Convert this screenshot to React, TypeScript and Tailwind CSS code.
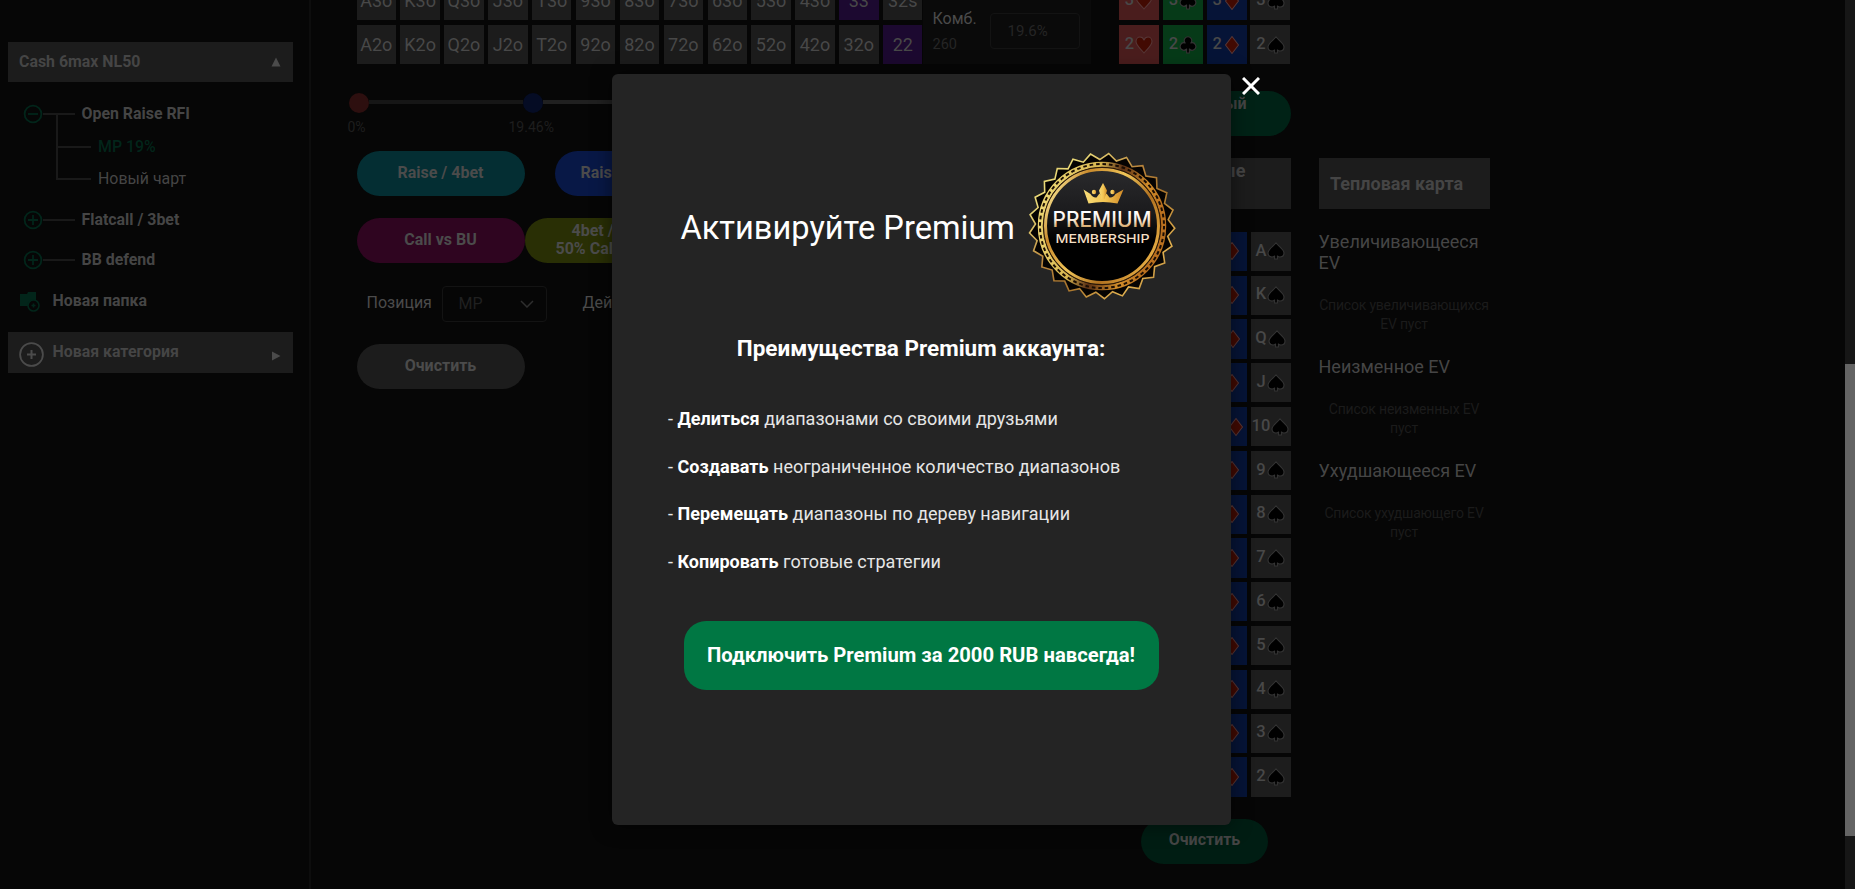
import React from "react";

type Suit = "heart" | "club" | "diamond" | "spade";

const SUIT_BG: Record<Suit, string> = {
  heart: "bg-[#4a1d1d]",
  club: "bg-[#063a18]",
  diamond: "bg-[#061437]",
  spade: "bg-[#1d1d1d]",
};

function SuitIcon({ suit }: { suit: Suit }) {
  const red = suit === "heart" || suit === "diamond";
  return (
    <svg
      viewBox="0 0 18 18"
      className="h-[18px] w-[18px] shrink-0"
      fill={red ? "#420a02" : "#000"}
      stroke={red ? "#563636" : "#343434"}
      strokeWidth="1.1"
      strokeLinejoin="round"
    >
      {suit === "heart" && (
        <path d="M9 17C7 14 1 10 1 5.6C1 2.8 2.9 1 5 1C7 1 8.4 2.3 9 4C9.600 2.300 11 1 13 1C15.100 1 17 2.800 17 5.600C17 10 11 14 9 17Z" />
      )}
      {suit === "diamond" && <path d="M9 .5L15.500 9L9 17.500L2.500 9Z" />}
      {suit === "spade" && (
        <path d="M9 .8C11 4 17 7 17 11C17 13.600 15 15 13 15C12 15 11 14.600 10.400 14V17H7.600V14C7 14.600 6 15 5 15C3 15 1 13.600 1 11C1 7 7 4 9 .8Z" />
      )}
      {suit === "club" && (
        <path d="M9 .8A3.700 3.700 0 0 1 11.800 7A3.700 3.700 0 1 1 10.400 13V17H7.600V13A3.700 3.700 0 1 1 6.200 7A3.700 3.700 0 0 1 9 .8Z" />
      )}
    </svg>
  );
}

function Card({ rank, suit }: { rank: string; suit: Suit }) {
  return (
    <div className={`flex h-[39.300px] w-10 items-center justify-center gap-px text-[16.500px] font-medium text-[#484848] ${SUIT_BG[suit]}`}>
      <span className="-mt-px">{rank}</span>
      <SuitIcon suit={suit} />
    </div>
  );
}

function CircleIcon({ minus, className }: { minus?: boolean; className: string }) {
  return (
    <svg viewBox="0 0 20 20" className={className} fill="none" stroke="currentColor" strokeWidth="1.8">
      <circle cx="10" cy="10" r="8.400" />
      <path d={minus ? "M5 10H15" : "M5 10H15M10 5V15"} />
    </svg>
  );
}

function FolderRow({ label, minus }: { label: string; minus?: boolean }) {
  return (
    <div className="flex h-8 items-center pl-[23px]">
      <CircleIcon minus={minus} className="h-5 w-5 text-[#02251a]" />
      <div className="h-[2px] w-8 bg-[#191919]" />
      <span className="ml-[6.500px] font-bold">{label}</span>
    </div>
  );
}

function Sidebar() {
  return (
    <aside className="h-full w-[311px] shrink-0 border-r-2 border-[#0d0d0d] pl-[7.500px] pt-[42px] text-[15.900px] leading-5 text-[#454545]">
      <div className="flex h-10 w-[285px] items-center justify-between bg-[#1c1c1c] pl-[11.500px] pr-3">
        <span className="font-bold">Cash 6max NL50</span>
        <svg viewBox="0 0 10 10" className="h-[10px] w-[10px]" fill="#4b4b4b"><path d="M5 .5L9.500 9.500H.5Z" /></svg>
      </div>
      <div className="-ml-[7.500px] mt-4">
        <FolderRow label="Open Raise RFI" minus />
        <div className="-mt-4 ml-[56px] h-[66px] w-[2px] bg-[#191919]" />
        <div className="-mt-[43px] ml-[57px] flex h-5 items-center">
          <div className="h-[2px] w-[34px] bg-[#191919]" />
          <span className="ml-[7px] font-medium text-[#02251a]">MP 19%</span>
        </div>
        <div className="ml-[57px] mt-3 flex h-5 items-center">
          <div className="h-[2px] w-[34px] bg-[#191919]" />
          <span className="ml-[7px]">Новый чарт</span>
        </div>
        <div className="mt-[15px] flex flex-col gap-2">
          <FolderRow label="Flatcall / 3bet" />
          <FolderRow label="BB defend" />
        </div>
      </div>
      <div className="mt-[14px] flex h-[22px] items-center pl-[11px]">
        <svg viewBox="0 0 22 22" className="mt-[2px] h-[22px] w-[22px]">
          <path d="M1 3H8L9 1H17V12H13L10 15H1Z" fill="#02251a" />
          <circle cx="14.500" cy="14.500" r="5.500" fill="#060606" stroke="#02251a" strokeWidth="1.600" />
          <path d="M14.500 12.500V16.500M12.500 14.500H16.500" stroke="#02251a" strokeWidth="1.600" />
        </svg>
        <span className="ml-3 font-bold">Новая папка</span>
      </div>
      <div className="mt-5 flex h-[41px] w-[285px] items-center bg-[#1c1c1c] pl-[11px] pr-3">
        <svg viewBox="0 0 25 25" className="mt-1 h-[25px] w-[25px]" fill="none" stroke="#4b4b4b">
          <circle cx="12.500" cy="12.500" r="11.400" strokeWidth="1.800" />
          <path d="M12.500 8V17M8 12.500H17" strokeWidth="2" />
        </svg>
        <span className="-mt-[2px] ml-[9px] font-bold">Новая категория</span>
        <svg viewBox="0 0 10 10" className="ml-auto mt-[7px] h-[10px] w-[10px]" fill="#4b4b4b"><path d="M1 .5L9.500 5L1 9.500Z" /></svg>
      </div>
    </aside>
  );
}

const ROW_3 = ["A3o", "K3o", "Q3o", "J3o", "T3o", "93o", "83o", "73o", "63o", "53o", "43o", "33", "32s"];
const ROW_2 = ["A2o", "K2o", "Q2o", "J2o", "T2o", "92o", "82o", "72o", "62o", "52o", "42o", "32o", "22"];

function RangeEditor() {
  const pill = "flex h-[45px] w-[168px] shrink-0 items-center rounded-full pb-[2px] text-[16px] font-bold leading-[18px] text-[#4b4b4b]";
  return (
    <section className="ml-[45.500px] w-[734.500px] shrink-0">
      <div className="-mt-[19px] flex">
        <div className="grid w-[566px] grid-cols-[repeat(13,minmax(0,1fr))] gap-x-[4.400px] gap-y-[5px]">
          {[...ROW_3, ...ROW_2].map((h) => (
            <div key={h} className={`flex h-[39px] items-center justify-center pb-px text-[18px] text-[#484848] ${h === "33" || h === "22" ? "bg-[#1c0930]" : "bg-[#1c1c1c]"}`}>
              {h}
            </div>
          ))}
        </div>
        <div className="flex h-[83px] w-[168.500px] bg-[#0a0a0a] pl-[10px] pt-[27px]">
          <div className="w-[57px]">
            <div className="pt-px text-[16px] leading-5 text-[#4b4b4b]">Комб.</div>
            <div className="mt-[6px] text-[14.500px] leading-5 text-[#252525]">260</div>
          </div>
          <div className="mt-[5px] flex h-9 w-[90px] items-center rounded border border-[#131313] pl-[17px] text-[15px] text-[#252525]">19.6%</div>
        </div>
      </div>

      <div className="-ml-2 mt-[29px] flex h-5 items-center">
        <div className="h-5 w-5 rounded-full bg-[#2d0f0f]" />
        <div className="-mt-[3px] h-1 w-[154.500px] bg-[#161616]" />
        <div className="h-5 w-5 rounded-full bg-[#050c24]" />
        <div className="-mt-[3px] h-1 w-[300px] bg-[#202020]" />
      </div>
      <div className="-ml-[9px] mt-1 flex h-5 items-center text-[14px] text-[#1e1e1e]">
        <span className="w-[161px]">0%</span>
        <span>19.46%</span>
      </div>

      <div className="mt-[14px] flex">
        <div className={`${pill} justify-center bg-[#042e33]`}>Raise / 4bet</div>
        <div className={`${pill} ml-[30px] bg-[#081846] pl-[26px]`}>Raise</div>
      </div>
      <div className="mt-[22px] flex">
        <div className={`${pill} justify-center bg-[#2f0520]`}>Call vs BU</div>
        <div className={`${pill} bg-[#292f05] pl-[31px]`}>
          <div>
            <div className="pl-4">4bet /</div>
            <div>50% Call</div>
          </div>
        </div>
      </div>
      <div className="mt-[23px] flex h-9 items-center pl-[10px] text-[16px] text-[#4b4b4b]">
        <span className="-mt-[2px] w-[75px]">Позиция</span>
        <div className="flex h-9 w-[105px] items-center justify-between rounded border border-[#131313] pl-4 pr-3 text-[16px] text-[#202020]">
          <span>MP</span>
          <svg viewBox="0 0 14 8" className="h-2 w-[14px]" fill="none" stroke="#2e2e2e" strokeWidth="1.500"><path d="M1 1L7 7L13 1" /></svg>
        </div>
        <span className="-mt-[2px] ml-9">Дей</span>
      </div>
      <div className={`${pill} mt-[22px] justify-center bg-[#1c1c1c]`}>Очистить</div>
    </section>
  );
}

const SUITS: Suit[] = ["heart", "club", "diamond", "spade"];
const RANKS = ["A", "K", "Q", "J", "10", "9", "8", "7", "6", "5", "4", "3", "2"];

function Board() {
  return (
    <section className="ml-7 w-[171.500px] shrink-0">
      <div className="-mt-[19px] flex flex-col gap-[4.700px]">
        {["3", "2"].map((r) => (
          <div key={r} className="flex justify-between">
            {SUITS.map((s) => <Card key={s} rank={r} suit={s} />)}
          </div>
        ))}
      </div>
      <div className="mt-[27px] h-[45px] rounded-full bg-[#002216] pr-[44px] pt-[3px] text-right text-[16px] font-bold leading-5 text-[#454545]">ый</div>
      <div className="mt-[22px] h-[51px] bg-[#1c1c1c] pr-[45px] pt-[3px] text-right text-[18px] font-bold leading-5 text-[#454545]">ые</div>
      <div className="mt-[22.500px] flex flex-col items-end gap-[4.500px]">
        {RANKS.map((r) => (
          <div key={r} className="flex gap-1">
            <Card rank={r} suit="diamond" />
            <Card rank={r} suit="spade" />
          </div>
        ))}
      </div>
      <div className="ml-[22px] mt-[22px] flex h-[45px] w-[127px] items-center justify-center rounded-full bg-[#001d13] pb-[3px] text-[16px] font-bold text-[#454545]">Очистить</div>
    </section>
  );
}

function HeatGroup({ title, empty }: { title: string; empty: string }) {
  return (
    <div>
      <h3 className="text-[18px] leading-[21px] text-[#454545]">{title}</h3>
      <p className="-mx-1 mb-[22px] mt-[23px] text-center text-[14px] leading-[19px] tracking-[-0.2px] text-[#1b1b1b]">{empty}</p>
    </div>
  );
}

function HeatMap() {
  return (
    <section className="ml-7 mt-[158px] w-[171px] shrink-0">
      <div className="flex h-[51px] items-center bg-[#1c1c1c] pb-px pl-[11.500px] text-[18px] font-bold text-[#454545]">Тепловая карта</div>
      <div className="mt-[22px]">
        <HeatGroup title="Увеличивающееся EV" empty="Список увеличивающихся EV пуст" />
        <HeatGroup title="Неизменное EV" empty="Список неизменных EV пуст" />
        <HeatGroup title="Ухудшающееся EV" empty="Список ухудшающего EV пуст" />
      </div>
    </section>
  );
}

const SPIKES = 25;
const burst = Array.from({ length: SPIKES * 2 }, (_, i) => {
  const a = ((5.300 + (i * 180) / SPIKES) * Math.PI) / 180;
  const r = i % 2 === 0 ? 72.800 : 66.500;
  return `${(74 + r * Math.sin(a)).toFixed(2)},${(74 - r * Math.cos(a)).toFixed(2)}`;
}).join(" ");

function PremiumBadge() {
  return (
    <svg viewBox="0 0 148 148" className="h-[148px] w-[148px] shrink-0">
      <defs>
        <linearGradient id="edge" x1="0" y1="0" x2="1" y2="1">
          <stop offset="0" stopColor="#e8d36a" />
          <stop offset=".2" stopColor="#e9d878" />
          <stop offset=".42" stopColor="#b8843c" />
          <stop offset=".6" stopColor="#a8742c" />
          <stop offset=".8" stopColor="#e0b050" />
          <stop offset="1" stopColor="#8a5a24" />
        </linearGradient>
        <linearGradient id="ring" x1="0" y1=".2" x2="1" y2=".8">
          <stop offset="0" stopColor="#fff0a0" />
          <stop offset=".2" stopColor="#c98a2c" />
          <stop offset=".45" stopColor="#f0c558" />
          <stop offset=".7" stopColor="#b0701f" />
          <stop offset="1" stopColor="#f0b84a" />
        </linearGradient>
        <linearGradient id="rope" x1="0" y1="0" x2="1" y2=".3">
          <stop offset="0" stopColor="#f2df7c" />
          <stop offset=".45" stopColor="#d6b550" />
          <stop offset=".62" stopColor="#5a2f14" />
          <stop offset=".85" stopColor="#d18d2a" />
          <stop offset="1" stopColor="#b9701f" />
        </linearGradient>
        <linearGradient id="disc" x1="0" y1="0" x2="0" y2="1">
          <stop offset="0" stopColor="#2a2a2c" />
          <stop offset=".38" stopColor="#1b1b1d" />
          <stop offset=".62" stopColor="#000" />
          <stop offset="1" stopColor="#000" />
        </linearGradient>
        <linearGradient id="letters" x1="0" y1="0" x2="0" y2="1">
          <stop offset=".2" stopColor="#fff" />
          <stop offset=".5" stopColor="#f8ecdc" />
          <stop offset=".9" stopColor="#c98d3c" />
        </linearGradient>
        <linearGradient id="crown" x1="0" y1="0" x2="1" y2="0">
          <stop offset="0" stopColor="#f7dc78" />
          <stop offset=".55" stopColor="#f2c452" />
          <stop offset="1" stopColor="#d08a28" />
        </linearGradient>
      </defs>
      <polygon points={burst} fill="#050302" stroke="url(#edge)" strokeWidth="1.600" />
      <circle cx="74" cy="74" r="61.500" fill="none" stroke="url(#rope)" strokeWidth="5.500" />
      <circle cx="74" cy="74" r="62" fill="none" stroke="#1a0d04" strokeWidth="2" strokeDasharray="3.600 2.893" />
      <circle cx="74" cy="74" r="58.800" fill="none" stroke="#2a1607" strokeWidth="1" />
      <circle cx="74" cy="74" r="56.500" fill="url(#disc)" stroke="url(#ring)" strokeWidth="3" />
      <g fill="url(#crown)">
        <path d="M60.500 51.500L55.500 37.500L62.500 42C64 44.500 66 46 68.500 45.500L71.500 41.500L75 46L78.500 41.500L81.500 45.500C84 46 86 44.500 87.500 42L95.500 37.500L89.500 51.500Q75 48.500 60.500 51.500Z" />
        <path d="M75 31L79 38.500L76.500 47H73.500L71 38.500Z" />
        <circle cx="66" cy="40" r="2.200" />
        <circle cx="84.500" cy="40" r="2.200" />
      </g>
      <g fontFamily="Inter, sans-serif" fill="url(#letters)">
        <text x="24.500" y="75.300" fontSize="21" fontWeight="500" textLength="99" lengthAdjust="spacingAndGlyphs">PREMIUM</text>
        <text x="27.500" y="91.300" fontSize="12" fontWeight="500" textLength="94" lengthAdjust="spacingAndGlyphs" fill="#f3dfc4">MEMBERSHIP</text>
      </g>
    </svg>
  );
}

const BENEFITS = [
  ["Делиться", "диапазонами со своими друзьями"],
  ["Создавать", "неограниченное количество диапазонов"],
  ["Перемещать", "диапазоны по дереву навигации"],
  ["Копировать", "готовые стратегии"],
];

function PremiumDialog() {
  return (
    <div className="absolute left-[611.500px] top-[74px] h-[751px] w-[619px] rounded-md bg-[#242424] shadow-[0_0_20px_rgba(0,0,0,0.5)]">
      <div className="flex items-center pl-[69px] pt-[78px] text-white">
        <h1 className="w-[347px] whitespace-nowrap pt-[3px] text-[32.600px] leading-10">Активируйте Premium</h1>
        <PremiumBadge />
      </div>
      <h2 className="mt-[34px] text-center text-[22.500px] font-bold leading-7 text-white">Преимущества Premium аккаунта:</h2>
      <ul className="mt-[45px] flex flex-col gap-[23.500px] pl-[56.500px] text-[18px] leading-6 text-[#e6e6e6]">
        {BENEFITS.map(([verb, rest]) => (
          <li key={verb} className="whitespace-nowrap">- <b className="font-bold text-white">{verb}</b> {rest}</li>
        ))}
      </ul>
      <button className="ml-[72px] mt-[47.500px] flex h-[69px] w-[475px] items-center justify-center whitespace-nowrap rounded-[22px] bg-[#007743] pb-px text-[20.250px] font-bold text-white">
        Подключить Premium за 2000 RUB навсегда!
      </button>
      <svg viewBox="0 0 18 18" className="absolute -right-[29px] top-[3px] h-[18px] w-[18px]" fill="none" stroke="#fff" strokeWidth="3">
        <path d="M1 1L17 17M17 1L1 17" />
      </svg>
    </div>
  );
}

export default function App() {
  return (
    <div className="relative flex h-[889px] w-full overflow-hidden bg-[#060606] font-[Roboto,sans-serif]">
      <Sidebar />
      <RangeEditor />
      <Board />
      <HeatMap />
      <div className="ml-auto h-full w-[10px] shrink-0 bg-[#161616] pt-[364px]">
        <div className="h-[472px] bg-[#646464]" />
      </div>
      <PremiumDialog />
    </div>
  );
}
